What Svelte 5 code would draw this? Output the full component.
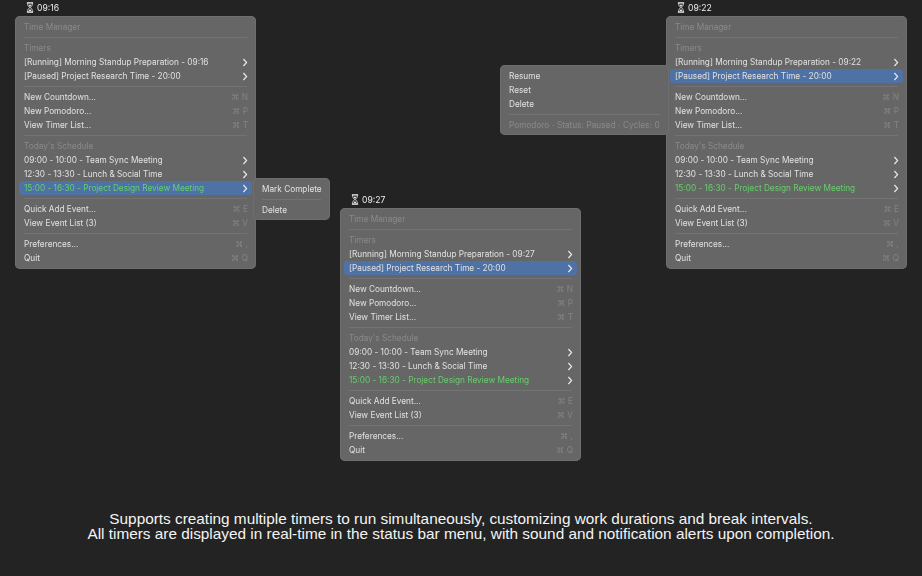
<script>
  const schedule = [
    { label: '09:00 - 10:00 - Team Sync Meeting', arrow: true },
    { label: '12:30 - 13:30 - Lunch & Social Time', arrow: true },
  ];

  const menus = [
    { id: 'left', time: '09:16', active: 'event' },
    { id: 'mid', time: '09:27', active: 'paused' },
    { id: 'right', time: '09:22', active: 'paused' },
  ];
</script>

{#snippet hourglass()}
  <svg class="glass" viewBox="0 0 9 12" width="8" height="11" aria-hidden="true">
    <path d="M1 .8h7M1 11.2h7" stroke="#f2f2f2" stroke-width="1.3" fill="none" />
    <path
      d="M2 1v1.8c0 1.3 1.6 2.2 1.9 3.2-.3 1-1.9 1.9-1.9 3.2V11M7 1v1.8C7 4.1 5.4 5 5.1 6c.3 1 1.9 1.9 1.9 3.2V11"
      stroke="#f2f2f2"
      stroke-width="1"
      fill="none"
    />
    <path d="M3 3h3L4.5 5.4zM2.8 10.2 4.5 7.6l1.7 2.6z" fill="#f2f2f2" />
  </svg>
{/snippet}

{#snippet row(label, key = '', arrow = false, on = false, green = false)}
  <div class="row" class:on class:green>
    <span class="label">{label}</span>
    {#if key}<span class="key"><i>⌘</i> {key}</span>{/if}
    {#if arrow}
      <svg class="chev" viewBox="0 0 6 9" width="6" height="9" aria-hidden="true">
        <path d="M1.4 1 4.6 4.5 1.4 8" stroke="currentColor" stroke-width="1.2" fill="none" />
      </svg>
    {/if}
  </div>
{/snippet}

<main class="stage">
  {#each menus as m}
    <section class="unit {m.id}">
      <div class="status">
        {@render hourglass()}
        <span>{m.time}</span>
      </div>
      <div class="menu">
        <div class="row head">Time Manager</div>
        <hr />
        <div class="row head">Timers</div>
        {@render row(`[Running] Morning Standup Preparation - ${m.time}`, '', true)}
        {@render row('[Paused] Project Research Time - 20:00', '', true, m.active === 'paused')}
        <hr />
        {@render row('New Countdown...', 'N')}
        {@render row('New Pomodoro...', 'P')}
        {@render row('View Timer List...', 'T')}
        <hr />
        <div class="row head">Today's Schedule</div>
        {#each schedule as s}
          {@render row(s.label, '', s.arrow)}
        {/each}
        {@render row('15:00 - 16:30 - Project Design Review Meeting', '', true, m.active === 'event', true)}
        <hr />
        {@render row('Quick Add Event...', 'E')}
        {@render row('View Event List (3)', 'V')}
        <hr />
        {@render row('Preferences...', ',')}
        {@render row('Quit', 'Q')}
      </div>
    </section>
  {/each}

  <div class="menu sub sub-event">
    {@render row('Mark Complete')}
    <hr />
    {@render row('Delete')}
  </div>

  <div class="menu sub sub-timer">
    {@render row('Resume')}
    {@render row('Reset')}
    {@render row('Delete')}
    <hr />
    <div class="row head info">Pomodoro · Status: Paused · Cycles: 0</div>
  </div>

  <p class="caption">
    Supports creating multiple timers to run simultaneously, customizing work durations and break intervals.<br />
    All timers are displayed in real-time in the status bar menu, with sound and notification alerts upon completion.
  </p>
</main>

<style>
  :global(body) {
    margin: 0;
    background: #232323;
  }

  .stage {
    position: relative;
    width: 922px;
    height: 576px;
    overflow: hidden;
    background: #232323;
    font-family: Inter, 'Noto Sans', sans-serif;
    font-size: 8.25px;
    color: #e2e2e2;
  }

  .unit {
    position: absolute;
    width: 241px;
  }

  .left { left: 15px; top: 0; }
  .right { left: 666px; top: 0; }
  .mid { left: 340px; top: 192px; }

  .status {
    height: 15px;
    margin-bottom: 1px;
    display: flex;
    align-items: center;
    gap: 3.5px;
    padding-left: 10.5px;
    box-sizing: border-box;
    color: #eeeeee;
    font-size: 8.6px;
    filter: blur(0.3px);
  }

  .glass {
    flex: none;
  }

  .menu {
    box-sizing: border-box;
    padding: 4px 0;
    border-radius: 5px;
    background: #666666;
    box-shadow: inset 0 0 0 1px #6e6e6e;
    filter: blur(0.3px);
  }

  .row {
    height: 14px;
    margin: 0 4px;
    padding: 0 5px;
    display: flex;
    align-items: center;
    justify-content: space-between;
    border-radius: 3px;
    white-space: nowrap;
  }

  .head {
    color: #8a8a8a;
  }

  .info {
    word-spacing: 0.3px;
  }

  .on {
    background: #4e72a6;
  }

  .green .label {
    color: #66cf6a;
  }

  .key {
    color: #848484;
    margin-right: -1px;
  }

  .key i {
    font-style: normal;
    font-family: 'DejaVu Sans', sans-serif;
  }

  .chev {
    flex: none;
    color: #e8e8e8;
    margin-right: -1px;
  }

  hr {
    height: 1px;
    margin: 3px 9px;
    border: 0;
    background: #737373;
  }

  .sub {
    position: absolute;
  }

  .sub-event {
    left: 253px;
    top: 178px;
    width: 77px;
    height: 42px;
  }

  .sub-timer {
    left: 500px;
    top: 65px;
    width: 169px;
    height: 70px;
  }

  .caption {
    position: absolute;
    left: 0;
    right: 0;
    top: 511px;
    margin: 0;
    text-align: center;
    font-family: 'Liberation Sans', Arial, sans-serif;
    font-size: 15.35px;
    line-height: 15px;
    color: #f4f4f4;
  }
</style>
